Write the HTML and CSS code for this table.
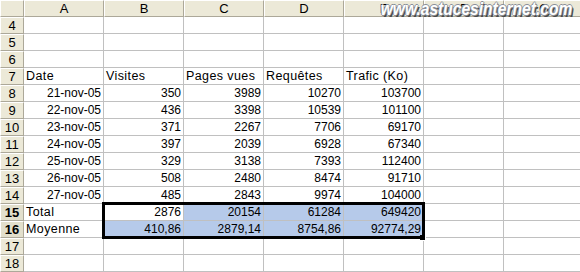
FILE: index.html
```html
<!DOCTYPE html>
<html lang="fr">
  <head>
    <title>Statistiques du site</title>
    <meta name="viewport" content="width=device-width, initial-scale=1">
    <link rel="stylesheet" href="styles.css">
  </head>
  <body>
    <div class="sheet">
      <!-- column headers -->
      <div class="hd corner"></div>
      <div class="hd">A</div>
      <div class="hd">B</div>
      <div class="hd">C</div>
      <div class="hd">D</div>
      <div class="hd">E</div>
      <div class="hd">F</div>
      <div class="hd">G</div>

      <div class="hd rn">4</div>
      <div class="c"></div><div class="c"></div><div class="c"></div><div class="c"></div><div class="c"></div><div class="c"></div><div class="c"></div>

      <div class="hd rn">5</div>
      <div class="c"></div><div class="c"></div><div class="c"></div><div class="c"></div><div class="c"></div><div class="c"></div><div class="c"></div>

      <div class="hd rn">6</div>
      <div class="c"></div><div class="c"></div><div class="c"></div><div class="c"></div><div class="c"></div><div class="c"></div><div class="c"></div>

      <div class="hd rn">7</div>
      <div class="c t">Date</div><div class="c t">Visites</div><div class="c t">Pages vues</div><div class="c t">Requêtes</div><div class="c t">Trafic (Ko)</div><div class="c"></div><div class="c"></div>

      <div class="hd rn">8</div>
      <div class="c n">21-nov-05</div><div class="c n">350</div><div class="c n">3989</div><div class="c n">10270</div><div class="c n">103700</div><div class="c"></div><div class="c"></div>

      <div class="hd rn">9</div>
      <div class="c n">22-nov-05</div><div class="c n">436</div><div class="c n">3398</div><div class="c n">10539</div><div class="c n">101100</div><div class="c"></div><div class="c"></div>

      <div class="hd rn">10</div>
      <div class="c n">23-nov-05</div><div class="c n">371</div><div class="c n">2267</div><div class="c n">7706</div><div class="c n">69170</div><div class="c"></div><div class="c"></div>

      <div class="hd rn">11</div>
      <div class="c n">24-nov-05</div><div class="c n">397</div><div class="c n">2039</div><div class="c n">6928</div><div class="c n">67340</div><div class="c"></div><div class="c"></div>

      <div class="hd rn">12</div>
      <div class="c n">25-nov-05</div><div class="c n">329</div><div class="c n">3138</div><div class="c n">7393</div><div class="c n">112400</div><div class="c"></div><div class="c"></div>

      <div class="hd rn">13</div>
      <div class="c n">26-nov-05</div><div class="c n">508</div><div class="c n">2480</div><div class="c n">8474</div><div class="c n">91710</div><div class="c"></div><div class="c"></div>

      <div class="hd rn">14</div>
      <div class="c n">27-nov-05</div><div class="c n">485</div><div class="c n">2843</div><div class="c n">9974</div><div class="c n">104000</div><div class="c"></div><div class="c"></div>

      <!-- totals, selected -->
      <div class="hd rn active">15</div>
      <div class="c t">Total</div><div class="c n">2876</div><div class="c n sel">20154</div><div class="c n sel">61284</div><div class="c n sel">649420</div><div class="c"></div><div class="c"></div>

      <div class="hd rn active">16</div>
      <div class="c t">Moyenne</div><div class="c n sel">410,86</div><div class="c n sel">2879,14</div><div class="c n sel">8754,86</div><div class="c n sel">92774,29</div><div class="c"></div><div class="c"></div>

      <div class="hd rn">17</div>
      <div class="c"></div><div class="c"></div><div class="c"></div><div class="c"></div><div class="c"></div><div class="c"></div><div class="c"></div>

      <div class="hd rn">18</div>
      <div class="c"></div><div class="c"></div><div class="c"></div><div class="c"></div><div class="c"></div><div class="c"></div><div class="c"></div>

      <!-- selection frame B15:E16 -->
      <div class="frame"></div>
      <div class="handle"></div>
    </div>

    <div class="stamp">www.astucesinternet.com</div>
  </body>
</html>
```

FILE: styles.css
```css
body {
  margin: 0;
  overflow: hidden;
  background: #fff;
  font-family: "Liberation Sans", Arial, sans-serif;
  font-size: 12px;
  color: #000;
}

.sheet {
  position: relative;
  display: grid;
  grid-template-columns: 24px repeat(7, 80px);
  grid-template-rows: 17px;
  grid-auto-rows: 17px;
  width: 584px;
}

.c {
  box-sizing: border-box;
  border-right: 1px solid #c0c0c0;
  border-bottom: 1px solid #c0c0c0;
  padding: 0 2px;
  line-height: 17px;
  white-space: nowrap;
  overflow: visible;
}
/* labels: bitmap sans is a bit wider than arial */
.t {
  font-size: 12.5px;
  letter-spacing: 0.4px;
}
.n {
  text-align: right;
}
.sel {
  background-color: #b6caea;
}

/* header cells, windows xp look */
.hd {
  box-sizing: border-box;
  background-color: #ece9d8;
  border-top: 1px solid #fff;
  border-left: 1px solid #fff;
  border-right: 1px solid #aca899;
  border-bottom: 1px solid #aca899;
  text-align: center;
  line-height: 15px;
  font-size: 13px;
}
.active {
  font-weight: bold;
  background-color: #e2dfcc;
}

.frame {
  position: absolute;
  left: 102px;
  top: 202px;
  width: 323px;
  height: 37px;
  box-sizing: border-box;
  border: 3px solid #000;
}
.handle {
  position: absolute;
  left: 420px;
  top: 235px;
  width: 5px;
  height: 5px;
  background: #000;
  border: 1px solid #fff;
  border-top: 0;
  border-left: 0;
}

.stamp {
  position: absolute;
  right: 8px;
  top: 0;
  white-space: nowrap;
  font-family: "Liberation Sans", Arial, sans-serif;
  font-size: 17.5px;
  font-weight: bold;
  font-style: italic;
  line-height: 19px;
  color: #fff;
  transform: scaleX(0.89);
  transform-origin: right top;
  text-shadow: -1px 0 #8a8f99, 1px 0 #8a8f99, 0 -1px #8a8f99, 0 1px #8a8f99, 2px 2px #4a4a4a;
}
```
